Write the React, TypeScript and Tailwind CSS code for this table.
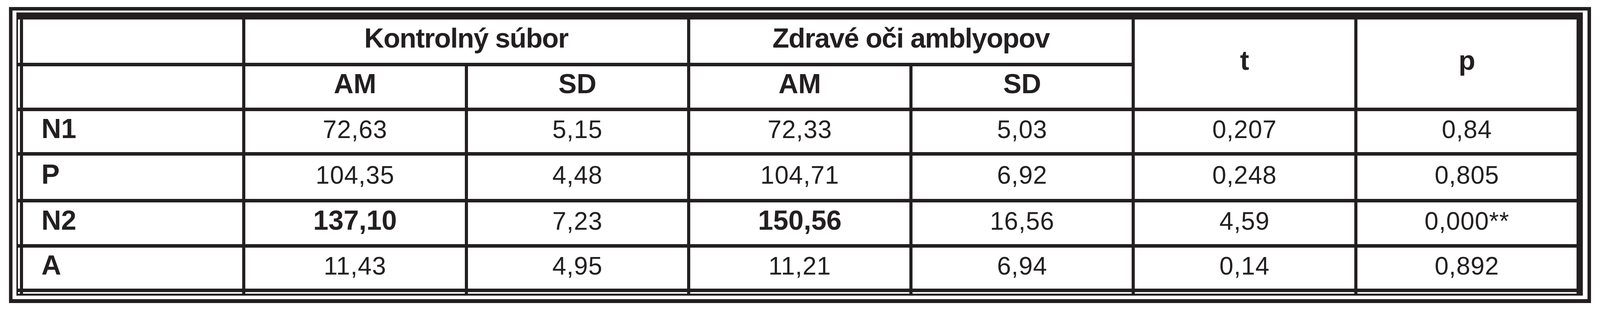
const rows = [
  { label: 'N1', values: [{ v: '72,63' }, { v: '5,15' }, { v: '72,33' }, { v: '5,03' }, { v: '0,207' }, { v: '0,84' }] },
  { label: 'P', values: [{ v: '104,35' }, { v: '4,48' }, { v: '104,71' }, { v: '6,92' }, { v: '0,248' }, { v: '0,805' }] },
  {
    label: 'N2',
    values: [{ v: '137,10', bold: true }, { v: '7,23' }, { v: '150,56', bold: true }, { v: '16,56' }, { v: '4,59' }, { v: '0,000**' }],
  },
  { label: 'A', values: [{ v: '11,43' }, { v: '4,95' }, { v: '11,21' }, { v: '6,94' }, { v: '0,14' }, { v: '0,892' }] },
];

function Spacer() {
  return <div className="bg-white" />;
}

function HeadCell({ children, className = '' }: { children?: React.ReactNode; className?: string }) {
  return (
    <div className={`flex items-center justify-center bg-white pb-[16px] text-[70px] font-bold ${className}`}>
      {children}
    </div>
  );
}

function ValueCell({ value, bold }: { value: string; bold?: boolean }) {
  return (
    <div
      className={`flex items-center justify-center bg-white ${
        bold ? 'pb-[16px] text-[70px] font-bold' : 'pb-[12px] text-[64px] tracking-[1px]'
      }`}
    >
      {value}
    </div>
  );
}

export default function App() {
  return (
    <div className="w-full bg-white px-[23px] pb-[23px] pt-[18px] font-['Liberation_Sans',Arial,sans-serif] leading-none text-[#231f20]">
      <div className="h-[759px] w-full border-[9px] border-b-[10px] border-[#231f20] pb-[9px] pl-[10px] pr-[12px] pt-[5px]">
        {/* double-ruled table: black background shows through the gaps as lines */}
        <div className="grid h-[726px] w-full grid-cols-[5px_repeat(7,minmax(0,1fr))] grid-rows-[111px_106px_105px_111px_107px_105px_4px] gap-x-[8px] gap-y-[9px] bg-[#231f20] pb-[5px] pl-[4px] pr-[16px] pt-[18px]">
          {/* header row 1 */}
          <Spacer />
          <Spacer />
          <HeadCell className="col-span-2 tracking-[-1.5px]">Kontrolný súbor</HeadCell>
          <HeadCell className="col-span-2 tracking-[-1.5px]">Zdravé oči amblyopov</HeadCell>
          <HeadCell className="row-span-2">t</HeadCell>
          <HeadCell className="row-span-2">p</HeadCell>

          {/* header row 2 */}
          <Spacer />
          <Spacer />
          <HeadCell>AM</HeadCell>
          <HeadCell>SD</HeadCell>
          <HeadCell>AM</HeadCell>
          <HeadCell>SD</HeadCell>

          {rows.map((row) => (
            <div key={row.label} className="contents">
              <Spacer />
              <div className="flex items-center bg-white pb-[16px] pl-[47px] text-[70px] font-bold">{row.label}</div>
              {row.values.map((cell, i) => (
                <ValueCell key={i} value={cell.v} bold={cell.bold} />
              ))}
            </div>
          ))}

          {/* thin strip under the last rule */}
          {Array.from({ length: 8 }).map((_, i) => (
            <Spacer key={i} />
          ))}
        </div>
      </div>
    </div>
  );
}
